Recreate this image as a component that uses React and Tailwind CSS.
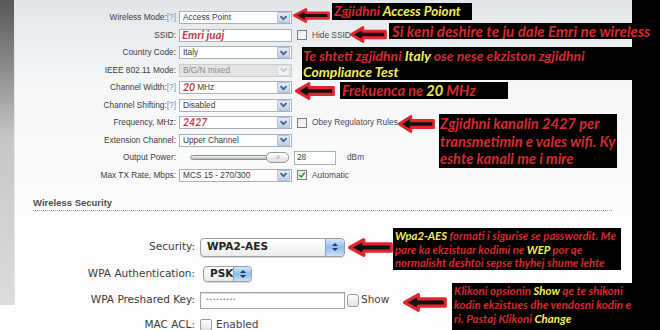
import React from "react";

const RED = "text-[#d42a2f]";
const YEL = "text-[#f3ee5c]";

function Chevron({ disabled }) {
  return (
    <span
      className={`mr-[1px] flex h-[11px] w-[13px] items-center justify-center rounded-[1px] border ${
        disabled ? "border-[#d6dde8] bg-[#eef1f6]" : "border-[#b3c2dc] bg-gradient-to-b from-[#e6edf8] to-[#bfcfea]"
      }`}
    >
      <svg width="9" height="6" viewBox="0 0 9 6">
        <polyline points="1.5,1.2 4.5,4.2 7.5,1.2" fill="none" stroke={disabled ? "#c3cbd9" : "#4a5e86"} strokeWidth="1.8" />
      </svg>
    </span>
  );
}

function XpSelect({ children, disabled }) {
  return (
    <div
      className={`flex h-[13px] w-[113px] items-center justify-between border ${
        disabled ? "border-[#c9cdd2] bg-[#e4e4e4] text-[#8a8a8a]" : "border-[#a9b0b8] bg-white text-[#3a3a3a]"
      }`}
    >
      <span className="flex items-center pl-[3px]">{children}</span>
      <Chevron disabled={disabled} />
    </div>
  );
}

function XpCheck({ checked }) {
  return (
    <span className="flex h-[10px] w-[10px] items-center justify-center border border-[#7d7d7d] bg-gradient-to-br from-[#e6e6e6] to-white">
      {checked && (
        <svg width="8" height="8" viewBox="0 0 8 8">
          <polyline points="1.2,4 3.2,6 6.8,1.6" fill="none" stroke="#21a121" strokeWidth="1.6" />
        </svg>
      )}
    </span>
  );
}

function Row({ label, help, children }) {
  return (
    <div className="flex h-[13px] items-center">
      <div className="w-[161px] text-right text-[#3d3d3d]">
        {label}
        {help && <span className="text-[#7592c6]">[?]</span>}
      </div>
      <div className="ml-[3px] flex items-center">{children}</div>
    </div>
  );
}

function Extra({ checked, children }) {
  return (
    <span className="ml-[5px] flex items-center gap-[5px] text-[#4a4a4a]">
      <XpCheck checked={checked} />
      {children}
    </span>
  );
}

const hand = "font-['Lato',sans-serif] font-bold italic";

function Stepper() {
  return (
    <span className="flex h-full w-[19px] flex-col items-center justify-center gap-[2px] rounded-r-[4px] border-l border-[#7ea7d4] bg-gradient-to-b from-[#d6e8fa] via-[#8dbcec] to-[#cbe2f8]">
      <svg width="6" height="3" viewBox="0 0 6 3"><polygon points="0,3 3,0 6,3" fill="#1f3a5e" /></svg>
      <svg width="6" height="3" viewBox="0 0 6 3"><polygon points="0,0 6,0 3,3" fill="#1f3a5e" /></svg>
    </span>
  );
}

function MacPopup({ children, className }) {
  return (
    <div className={`flex items-center justify-between overflow-hidden rounded-[4px] border border-[#9d9d9d] bg-gradient-to-b from-white to-[#ececec] shadow-[0_1px_1px_rgba(0,0,0,0.15)] ${className}`}>
      <span className="pl-[6px] font-bold text-[#222]">{children}</span>
      <Stepper />
    </div>
  );
}

function MacRow({ label, children, className = "" }) {
  return (
    <div className={`flex items-center ${className}`}>
      <div className="w-[180px] text-right text-[#3a3a3a]">{label}</div>
      <div className="ml-[5px] flex items-center">{children}</div>
    </div>
  );
}

function Arrow({ className }) {
  return (
    <svg className={`absolute ${className}`} viewBox="0 0 40 16" preserveAspectRatio="none">
      <polygon
        points="1.5,8 14,1.5 14,5 38.5,5 38.5,11 14,11 14,14.5"
        fill="#111"
        stroke="#e2262d"
        strokeWidth="2.8"
        strokeLinejoin="round"
      />
    </svg>
  );
}

function Note({ className, children }) {
  return <div className={`absolute overflow-hidden whitespace-nowrap bg-black ${hand} ${RED} ${className}`}>{children}</div>;
}

export default function App() {
  return (
    <div className="relative flex h-[330px] w-[660px] overflow-hidden bg-black font-['Liberation_Sans',Arial,sans-serif]">
      <div className="flex w-[15px] flex-col">
        <div className="h-[305px] border-r border-[#e6e6e6] bg-gradient-to-b from-[#585858] via-[#c6c6c6] via-45% to-[#dddddd]" />
        <div className="flex-1 bg-white" />
      </div>

      <main className="flex w-[617px] flex-col">
        <section className="h-[212px] bg-gradient-to-b from-[#e2e7eb] via-[#f5f7f8] via-40% to-[#fcfcfc] text-[8.3px]">
          <div className="flex flex-col gap-[4.5px] pt-[11px]">
            <Row label="Wireless Mode:" help>
              <XpSelect>Access Point</XpSelect>
            </Row>
            <Row label="SSID:">
              <div className="flex h-[13px] w-[113px] items-center border border-[#a9b0b8] bg-white pl-[2px]">
                <span className={`${hand} text-[11.5px] text-[#c9384a]`}>Emri juaj</span>
              </div>
              <Extra>Hide SSID</Extra>
            </Row>
            <Row label="Country Code:">
              <XpSelect>Italy</XpSelect>
            </Row>
            <Row label="IEEE 802.11 Mode:">
              <XpSelect disabled>B/G/N mixed</XpSelect>
            </Row>
            <Row label="Channel Width:" help>
              <XpSelect>
                <span className={`${hand} mr-[2px] text-[10.5px] text-[#c9384a]`}>20</span>MHz
              </XpSelect>
            </Row>
            <Row label="Channel Shifting:" help>
              <XpSelect>Disabled</XpSelect>
            </Row>
            <Row label="Frequency, MHz:">
              <XpSelect>
                <span className={`${hand} text-[10.5px] text-[#c9384a]`}>2427</span>
              </XpSelect>
              <Extra>Obey Regulatory Rules</Extra>
            </Row>
            <Row label="Extension Channel:">
              <XpSelect>Upper Channel</XpSelect>
            </Row>
            <Row label="Output Power:">
              <div className="flex w-[113px] items-center pl-[11px]">
                <div className="h-[5px] w-[78px] rounded-l-full border border-[#8e8e8e] bg-gradient-to-b from-[#f2f2f2] to-[#bdbdbd]" />
                <div className="-ml-[2px] flex h-[11px] w-[23px] items-center justify-center rounded-[5px] border border-[#9a9a9a] bg-gradient-to-b from-white to-[#dedede] text-[6px] tracking-[-1px] text-[#b8b8b8]">
                  ////
                </div>
              </div>
              <div className="ml-[2px] flex h-[14px] w-[42px] items-center border border-[#a9b0b8] bg-white pl-[2px] text-[#3a3a3a]">28</div>
              <span className="ml-[11px] text-[#4a4a4a]">dBm</span>
            </Row>
            <Row label="Max TX Rate, Mbps:">
              <XpSelect>MCS 15 - 270/300</XpSelect>
              <Extra checked>Automatic</Extra>
            </Row>
          </div>
          <div className="ml-[18px] mt-[15px] w-[579px] border-b border-dotted border-[#9a9a9a] pb-[1px] text-[9.5px] font-bold leading-[12px] text-[#4f4f4f]">
            Wireless Security
          </div>
        </section>

        <section className="flex flex-1 flex-col bg-[#fefcfc] pt-[27px] font-['DejaVu_Sans',sans-serif] text-[10.5px]">
          <MacRow label="Security:" className="h-[19px]">
            <MacPopup className="h-[19px] w-[145px] text-[10.5px]">WPA2-AES</MacPopup>
          </MacRow>
          <MacRow label="WPA Authentication:" className="mt-[9px] h-[16px]">
            <MacPopup className="ml-[3px] h-[16px] w-[49px] text-[10.5px]">PSK</MacPopup>
          </MacRow>
          <MacRow label="WPA Preshared Key:" className="mt-[10px] h-[17px]">
            <div className="flex h-[17px] w-[145px] items-center border border-[#a3a3a3] bg-white pl-[5px] text-[5px] tracking-[0.4px] text-[#555] shadow-[inset_0_1px_1px_rgba(0,0,0,0.15)]">
              •••••••••
            </div>
            <span className="ml-[2px] h-[13px] w-[12px] rounded-[3px] border border-[#9a9a9a] bg-gradient-to-b from-white to-[#e4e4e4]" />
            <span className="ml-[2px] text-[#444]">Show</span>
          </MacRow>
          <MacRow label="MAC ACL:" className="mt-[9px] h-[14px]">
            <span className="h-[12px] w-[12px] rounded-[2px] border border-[#9a9a9a] bg-gradient-to-b from-white to-[#e4e4e4]" />
            <span className="ml-[4px] text-[#444]">Enabled</span>
          </MacRow>
        </section>
      </main>

      <div className="flex-1 bg-black" />

      <Arrow className="left-[293px] top-[8px] h-[15px] w-[37px]" />
      <Note className="left-[332px] top-[3px] h-[17px] w-[140px] pl-[2px] text-[13.5px] leading-[17px]">
        Zgjidhni <span className={YEL}>Access Poiont</span>
      </Note>

      <Arrow className="left-[350px] top-[26px] h-[17px] w-[37px]" />
      <Note className="left-[389px] top-[23px] h-[16px] w-[271px] pl-[3px] text-[15.2px] leading-[16px]">
        Si keni deshire te ju dale Emri ne wireless
      </Note>

      <Note className="left-[302px] top-[47px] h-[33px] w-[358px] pl-[1px] pt-[1px] text-[14px] leading-[16px]">
        Te shteti zgjidhni <span className={YEL}>Italy</span> ose nese ekziston zgjidhni
        <br />
        <span className={YEL}>Compliance Test</span>
      </Note>

      <Arrow className="left-[295px] top-[82px] h-[18px] w-[40px]" />
      <Note className="left-[340px] top-[82px] h-[17px] w-[168px] pl-[2px] text-[14.5px] leading-[17px]">
        Frekuenca ne <span className={YEL}>20</span> MHz
      </Note>

      <Arrow className="left-[398px] top-[115px] h-[18px] w-[37px]" />
      <Note className="left-[439px] top-[114px] h-[54px] w-[178px] pl-[1px] pt-[1px] text-[14.7px] leading-[17.5px]">
        Zgjidhni kanalin 2427 per
        <br />
        transmetimin e vales wifi. Ky
        <br />
        eshte kanali me i mire
      </Note>

      <Arrow className="left-[348px] top-[238px] h-[19px] w-[45px]" />
      <Note className="left-[393px] top-[228px] h-[42px] w-[228px] pl-[2px] pt-[1px] text-[11.3px] leading-[13.5px]">
        <span className={YEL}>Wpa2-AES</span> formati i sigurise se passwordit. Me
        <br />
        pare ka ekzistuar kodimi ne <span className={YEL}>WEP</span> por qe
        <br />
        normalisht deshtoi sepse thyhej shume lehte
      </Note>

      <Arrow className="left-[403px] top-[293px] h-[19px] w-[44px]" />
      <Note className="left-[452px] top-[283px] h-[47px] w-[180px] pl-[2px] pt-[1px] text-[11.5px] leading-[14px]">
        Klikoni opsionin <span className={YEL}>Show</span> qe te shikoni
        <br />
        kodin ekzistues dhe vendosni kodin e
        <br />
        ri. Pastaj Klikoni <span className={YEL}>Change</span>
      </Note>
    </div>
  );
}
